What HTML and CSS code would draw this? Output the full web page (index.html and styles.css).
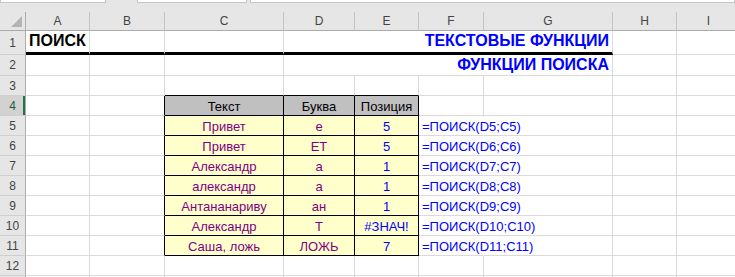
FILE: index.html
```html
<!DOCTYPE html>
<html lang="ru">
<head>
  <meta charset="UTF-8">
  <title>ПОИСК</title>
  <link rel="stylesheet" href="styles.css">
</head>
<body>
  <div class="bar">
    <span class="box name"></span>
    <span class="box btns"></span>
    <span class="box formula"></span>
  </div>

  <div class="sheet">
    <div class="row cols">
      <div class="corner"></div>
      <div>A</div><div>B</div><div>C</div><div>D</div><div>E</div>
      <div>F</div><div>G</div><div>H</div><div>I</div>
    </div>

    <div class="row r1">
      <div class="rh">1</div>
      <div class="c thick big left">ПОИСК</div>
      <div class="c thick"></div>
      <div class="c thick"></div>
      <div class="c thick big blue wide">ТЕКСТОВЫЕ ФУНКЦИИ</div>
      <div class="c"></div>
      <div class="c"></div>
    </div>

    <div class="row r2">
      <div class="rh">2</div>
      <div class="c"></div>
      <div class="c"></div>
      <div class="c"></div>
      <div class="c big blue wide">ФУНКЦИИ ПОИСКА</div>
      <div class="c"></div>
      <div class="c"></div>
    </div>

    <div class="row">
      <div class="rh">3</div>
      <div class="c"></div><div class="c"></div>
      <div class="c edge-b"></div><div class="c edge-b"></div><div class="c edge-b"></div>
      <div class="c"></div><div class="c"></div><div class="c"></div><div class="c"></div>
    </div>

    <div class="row">
      <div class="rh sel">4</div>
      <div class="c"></div><div class="c edge-r"></div>
      <div class="c th">Текст</div>
      <div class="c th">Буква</div>
      <div class="c th">Позиция</div>
      <div class="c"></div><div class="c"></div><div class="c"></div><div class="c"></div>
    </div>

    <div class="row">
      <div class="rh">5</div>
      <div class="c"></div><div class="c edge-r"></div>
      <div class="c val txt">Привет</div>
      <div class="c val txt">е</div>
      <div class="c val num">5</div>
      <div class="c fx">=ПОИСК(D5;C5)</div>
      <div class="c"></div><div class="c"></div><div class="c"></div>
    </div>

    <div class="row">
      <div class="rh">6</div>
      <div class="c"></div><div class="c edge-r"></div>
      <div class="c val txt">Привет</div>
      <div class="c val txt">ЕТ</div>
      <div class="c val num">5</div>
      <div class="c fx">=ПОИСК(D6;C6)</div>
      <div class="c"></div><div class="c"></div><div class="c"></div>
    </div>

    <div class="row">
      <div class="rh">7</div>
      <div class="c"></div><div class="c edge-r"></div>
      <div class="c val txt">Александр</div>
      <div class="c val txt">а</div>
      <div class="c val num">1</div>
      <div class="c fx">=ПОИСК(D7;C7)</div>
      <div class="c"></div><div class="c"></div><div class="c"></div>
    </div>

    <div class="row">
      <div class="rh">8</div>
      <div class="c"></div><div class="c edge-r"></div>
      <div class="c val txt">александр</div>
      <div class="c val txt">а</div>
      <div class="c val num">1</div>
      <div class="c fx">=ПОИСК(D8;C8)</div>
      <div class="c"></div><div class="c"></div><div class="c"></div>
    </div>

    <div class="row">
      <div class="rh">9</div>
      <div class="c"></div><div class="c edge-r"></div>
      <div class="c val txt">Антананариву</div>
      <div class="c val txt">ан</div>
      <div class="c val num">1</div>
      <div class="c fx">=ПОИСК(D9;C9)</div>
      <div class="c"></div><div class="c"></div><div class="c"></div>
    </div>

    <div class="row">
      <div class="rh">10</div>
      <div class="c"></div><div class="c edge-r"></div>
      <div class="c val txt">Александр</div>
      <div class="c val txt">Т</div>
      <div class="c val num">#ЗНАЧ!</div>
      <div class="c fx">=ПОИСК(D10;C10)</div>
      <div class="c"></div><div class="c"></div><div class="c"></div>
    </div>

    <div class="row">
      <div class="rh">11</div>
      <div class="c"></div><div class="c edge-r"></div>
      <div class="c val txt">Саша, ложь</div>
      <div class="c val txt">ЛОЖЬ</div>
      <div class="c val num">7</div>
      <div class="c fx">=ПОИСК(D11;C11)</div>
      <div class="c"></div><div class="c"></div><div class="c"></div>
    </div>

    <div class="row">
      <div class="rh">12</div>
      <div class="c"></div><div class="c"></div><div class="c"></div><div class="c"></div><div class="c"></div>
      <div class="c"></div><div class="c"></div><div class="c"></div><div class="c"></div>
    </div>

    <!-- top edge of the next row peeks in at the bottom -->
    <div class="row">
      <div class="rh"></div>
      <div class="c"></div><div class="c"></div><div class="c"></div><div class="c"></div><div class="c"></div>
      <div class="c"></div><div class="c"></div><div class="c"></div><div class="c"></div>
    </div>
  </div>
</body>
</html>
```

FILE: styles.css
```css
html {
  box-sizing: border-box;
}
*, *::before, *::after {
  box-sizing: inherit;
}

body {
  margin: 0;
  background: #fff;
  font-family: "Liberation Sans", Arial, sans-serif;
  font-size: 13px;
  overflow: hidden;
}

/* bottom edge of the formula bar */
.bar {
  height: 12px;
  background: #e6e6e6;
  display: flex;
  align-items: flex-start;
}
.box {
  height: 3px;
  background: #fff;
  border: 1px solid #c6c6c6;
  border-top: 0;
}
.name { width: 106px; }
.btns { width: 110px; margin-left: 31px; }
.formula { flex: 1; margin-left: 3px; }

.row {
  display: grid;
  grid-template-columns: 26px 64px 75px 119px 71px 64px 65px 129px 64px 64px;
  height: 20px;
}
.r1 { height: 24px; }
.r2 { height: 21px; }

/* column letters */
.cols {
  height: 19px;
  background: #e6e6e6;
  color: #444;
  font-size: 12px;
}
.cols > div {
  display: flex;
  align-items: center;
  justify-content: center;
  border-right: 1px solid #c4c4c4;
  border-bottom: 1px solid #ababab;
}
.cols > .corner {
  position: relative;
  border-right-color: #ababab;
}
.corner::after {
  content: "";
  position: absolute;
  right: 3px;
  bottom: 3px;
  width: 11px;
  height: 11px;
  background: #b4b4b4;
  clip-path: polygon(100% 0, 100% 100%, 0 100%);
}

/* row numbers */
.rh {
  background: #e6e6e6;
  color: #444;
  font-size: 12px;
  display: flex;
  align-items: center;
  justify-content: center;
  border-right: 1px solid #ababab;
  border-bottom: 1px solid #cfcfcf;
}
.rh.sel {
  background: #d2d2d2;
  color: #1d5e39;
  box-shadow: inset -2px 0 #217346;
}

/* cells */
.c {
  min-width: 0;
  display: flex;
  align-items: flex-end;
  justify-content: center;
  padding: 0 3px 1px;
  line-height: 15px;
  white-space: nowrap;
  border-right: 1px solid #dadada;
  border-bottom: 1px solid #dadada;
}
.left { justify-content: flex-start; }
.wide {
  grid-column: span 4;
  justify-content: flex-end;
}
.big {
  font-size: 16px;
  font-weight: bold;
  line-height: 18px;
}
.thick {
  border-bottom: 3px solid #000;
  padding-bottom: 2px;
}
.blue { color: #0000ff; }

.edge-r { border-right-color: #000; }
.edge-b { border-bottom-color: #000; }

.th {
  background: #c0c0c0;
  border-right-color: #000;
  border-bottom-color: #000;
}
.val {
  background: #ffffcc;
  border-right-color: #000;
  border-bottom-color: #000;
}
.txt { color: #800080; }
.num { color: #0000ff; }

/* formula text runs over the next column */
.fx {
  justify-content: flex-start;
  color: #0000ff;
  border-right-color: transparent;
}
```
